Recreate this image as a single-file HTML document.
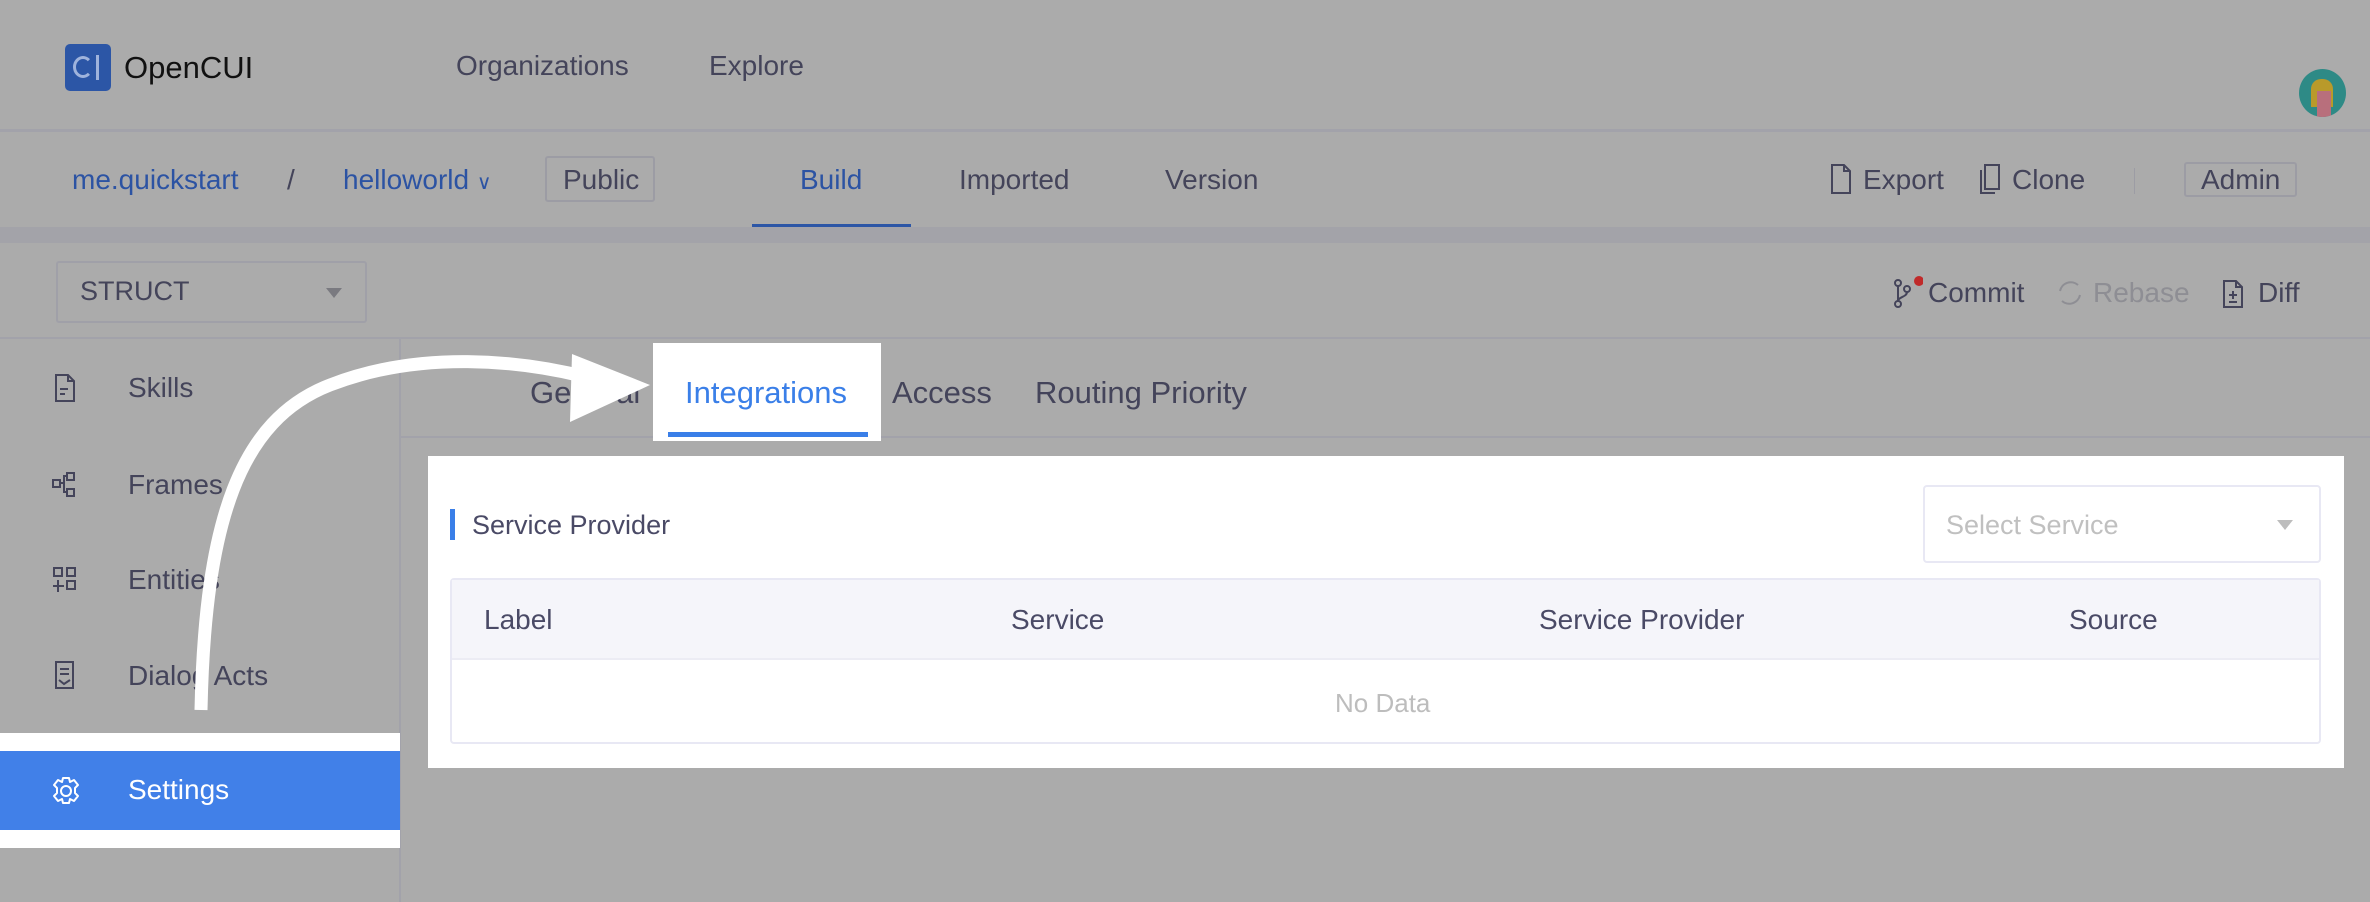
<!DOCTYPE html>
<html><head><meta charset="utf-8"><style>
*{margin:0;padding:0;box-sizing:border-box}
body{width:2370px;height:902px;background:#ababab;position:relative;overflow:hidden;font-family:"Liberation Sans",Arial,sans-serif;color:#44445a}
.a{position:absolute;white-space:nowrap;line-height:1}
.hl{position:absolute;left:0;width:2370px;height:3px;background:#a2a2aa}
.t28{font-size:28px}
</style></head><body>
<!-- header -->
<div class="a" style="left:65px;top:44px;width:46px;height:47px;background:#2c56a6;border-radius:5px"></div>
<div class="a" style="left:73px;top:56px;width:20px;height:22px;border:3px solid #9fb3dc;border-radius:50%;border-right-color:transparent"></div>
<div class="a" style="left:96px;top:55px;width:3px;height:25px;background:#9fb3dc"></div>
<div class="a" style="left:124px;top:52px;font-size:31px;color:#111">OpenCUI</div>
<div class="a t28" style="left:456px;top:52px">Organizations</div>
<div class="a t28" style="left:709px;top:52px">Explore</div>
<div class="a" style="left:2299px;top:69px;width:47px;height:48px;border-radius:50%;background:#2e8a86;overflow:hidden"><div style="position:absolute;left:12px;top:10px;width:22px;height:28px;background:#b99a2a;border-radius:10px 10px 0 0"></div><div style="position:absolute;left:18px;top:22px;width:14px;height:26px;background:#b86f7c"></div></div>
<div class="hl" style="top:129px"></div>
<!-- row2 -->
<div class="a t28" style="left:72px;top:166px;color:#2c53a3">me.quickstart</div>
<div class="a t28" style="left:287px;top:166px">/</div>
<div class="a t28" style="left:343px;top:166px;color:#2c53a3">helloworld <span style="font-size:20px">&#8744;</span></div>
<div class="a" style="left:545px;top:156px;width:110px;height:46px;border:2px solid #9c9ca4;border-radius:3px"></div>
<div class="a t28" style="left:563px;top:166px">Public</div>
<div class="a t28" style="left:800px;top:166px;color:#2c53a3">Build</div>
<div class="a t28" style="left:959px;top:166px">Imported</div>
<div class="a t28" style="left:1165px;top:166px">Version</div>
<div class="a" style="left:752px;top:224px;width:159px;height:4px;background:#2c56a6"></div>
<svg class="a" style="left:1830px;top:163px" width="22" height="32" viewBox="0 0 22 32"><path d="M2 2h12l6 6v22H2z M14 2v6h6" fill="none" stroke="#44445a" stroke-width="2"/></svg>
<div class="a t28" style="left:1863px;top:166px">Export</div>
<svg class="a" style="left:1978px;top:163px" width="24" height="32" viewBox="0 0 24 32"><path d="M7 2h14v24H7z M3 7v23h14" fill="none" stroke="#44445a" stroke-width="2"/></svg>
<div class="a t28" style="left:2012px;top:166px">Clone</div>
<div class="a" style="left:2134px;top:168px;width:1px;height:26px;background:#9c9ca4"></div>
<div class="a" style="left:2184px;top:162px;width:113px;height:35px;border:2px solid #9c9ca4;border-radius:3px"></div>
<div class="a t28" style="left:2201px;top:166px">Admin</div>
<div class="a" style="left:0;top:227px;width:2370px;height:16px;background:#a3a3a9"></div>
<!-- row3 -->
<div class="a" style="left:56px;top:261px;width:311px;height:62px;border:2px solid #a0a0a8;border-radius:3px"></div>
<div class="a" style="left:80px;top:278px;font-size:27px">STRUCT</div>
<div class="a" style="left:326px;top:288px;width:0;height:0;border-left:8px solid transparent;border-right:8px solid transparent;border-top:10px solid #7a7a80"></div>
<svg class="a" style="left:1893px;top:276px" width="30" height="32" viewBox="0 0 30 32"><circle cx="5" cy="7" r="3" fill="none" stroke="#44445a" stroke-width="2"/><circle cx="5" cy="28" r="3" fill="none" stroke="#44445a" stroke-width="2"/><circle cx="14" cy="13" r="3" fill="none" stroke="#44445a" stroke-width="2"/><path d="M5 10v15 M14 16c0 5-9 5-9 9" fill="none" stroke="#44445a" stroke-width="2"/><circle cx="26" cy="5" r="5" fill="#c02a2a"/></svg>
<div class="a t28" style="left:1928px;top:279px">Commit</div>
<svg class="a" style="left:2056px;top:279px" width="28" height="28" viewBox="0 0 28 28"><path d="M22 6a11 11 0 0 0-18 6 M6 22a11 11 0 0 0 18-6" fill="none" stroke="#8e8e94" stroke-width="2"/></svg>
<div class="a t28" style="left:2093px;top:279px;color:#8e8e94">Rebase</div>
<svg class="a" style="left:2222px;top:277px" width="24" height="32" viewBox="0 0 24 32"><path d="M2 4h12l6 6v20H2z M14 4v6h6 M11 14v8 M7 18h8 M7 25h8" fill="none" stroke="#44445a" stroke-width="2"/></svg>
<div class="a t28" style="left:2258px;top:279px">Diff</div>
<div class="hl" style="top:337px;height:2px"></div>
<!-- sidebar -->
<div class="a" style="left:399px;top:339px;width:2px;height:563px;background:#a2a2aa"></div>
<svg class="a" style="left:54px;top:373px" width="22" height="30" viewBox="0 0 22 30"><path d="M2 2h12l6 6v20H2z M14 2v6h6 M6 16h8 M6 21h5" fill="none" stroke="#44445a" stroke-width="2"/></svg>
<div class="a t28" style="left:128px;top:374px">Skills</div>
<svg class="a" style="left:52px;top:471px" width="26" height="28" viewBox="0 0 26 28"><rect x="1" y="9" width="7" height="7" fill="none" stroke="#44445a" stroke-width="2"/><rect x="15" y="2" width="7" height="7" fill="none" stroke="#44445a" stroke-width="2"/><rect x="15" y="18" width="7" height="7" fill="none" stroke="#44445a" stroke-width="2"/><path d="M8 12h4v-7h3 M12 12v9h3" fill="none" stroke="#44445a" stroke-width="2"/></svg>
<div class="a t28" style="left:128px;top:471px">Frames</div>
<svg class="a" style="left:52px;top:566px" width="26" height="28" viewBox="0 0 26 28"><rect x="2" y="2" width="8" height="8" fill="none" stroke="#44445a" stroke-width="2"/><rect x="15" y="2" width="8" height="8" fill="none" stroke="#44445a" stroke-width="2"/><rect x="15" y="15" width="8" height="8" fill="none" stroke="#44445a" stroke-width="2"/><path d="M6 14v12 M1 20h11" fill="none" stroke="#44445a" stroke-width="2"/></svg>
<div class="a t28" style="left:128px;top:566px">Entities</div>
<svg class="a" style="left:54px;top:660px" width="22" height="30" viewBox="0 0 22 30"><path d="M2 2h17v26H2z M6 9h9 M6 14h9 M5 20l5 4 6-4" fill="none" stroke="#44445a" stroke-width="2"/></svg>
<div class="a t28" style="left:128px;top:662px">Dialog Acts</div>
<div class="a" style="left:0;top:733px;width:400px;height:115px;background:#fff"></div>
<div class="a" style="left:0;top:751px;width:400px;height:79px;background:#4180e8"></div>
<svg class="a" style="left:52px;top:776px" width="28" height="30" viewBox="0 0 28 30"><circle cx="14" cy="15" r="5" fill="none" stroke="#fff" stroke-width="2"/><path d="M11 2h6l1 4 4-2 4 5-3 3 0 5 3 3-4 5-4-2-1 4h-6l-1-4-4 2-4-5 3-3 0-5-3-3 4-5 4 2z" fill="none" stroke="#fff" stroke-width="2" stroke-linejoin="round"/></svg>
<div class="a t28" style="left:128px;top:776px;color:#fff">Settings</div>
<!-- tabs -->
<div class="a" style="left:401px;top:436px;width:1969px;height:2px;background:#a2a2aa"></div>
<div class="a" style="left:530px;top:377px;font-size:31px">General</div>
<div class="a" style="left:653px;top:343px;width:228px;height:98px;background:#fff"></div>
<div class="a" style="left:685px;top:377px;font-size:31px;color:#3a7fe8">Integrations</div>
<div class="a" style="left:668px;top:432px;width:200px;height:5px;background:#3a7fe8"></div>
<div class="a" style="left:892px;top:377px;font-size:31px">Access</div>
<div class="a" style="left:1035px;top:377px;font-size:31px">Routing Priority</div>
<!-- panel -->
<div class="a" style="left:428px;top:456px;width:1916px;height:312px;background:#fff"></div>
<div class="a" style="left:450px;top:509px;width:5px;height:31px;background:#3a7fe8"></div>
<div class="a" style="left:472px;top:512px;font-size:27px;color:#4a4a66">Service Provider</div>
<div class="a" style="left:1923px;top:485px;width:398px;height:78px;border:2px solid #e8e8f4;border-radius:4px"></div>
<div class="a" style="left:1946px;top:512px;font-size:27px;color:#c0c0c0">Select Service</div>
<div class="a" style="left:2277px;top:520px;width:0;height:0;border-left:8px solid transparent;border-right:8px solid transparent;border-top:10px solid #bdbdbd"></div>
<div class="a" style="left:450px;top:578px;width:1871px;height:166px;border:2px solid #e8e8f4;border-radius:4px"></div>
<div class="a" style="left:452px;top:580px;width:1867px;height:80px;background:#f5f5fa;border-bottom:2px solid #ececf4"></div>
<div class="a t28" style="left:484px;top:606px;color:#4a4a66">Label</div>
<div class="a t28" style="left:1011px;top:606px;color:#4a4a66">Service</div>
<div class="a t28" style="left:1539px;top:606px;color:#4a4a66">Service Provider</div>
<div class="a t28" style="left:2069px;top:606px;color:#4a4a66">Source</div>
<div class="a" style="left:1335px;top:690px;font-size:26px;color:#bdbdbd">No Data</div>
<!-- arrow -->
<svg class="a" style="left:0;top:0" width="2370" height="902" viewBox="0 0 2370 902"><path d="M201 710 C205 520 240 420 330 385 C420 350 520 360 590 378" fill="none" stroke="#fff" stroke-width="13"/><path d="M572 354 L650 385 L570 422 Z" fill="#fff"/></svg>
</body></html>
